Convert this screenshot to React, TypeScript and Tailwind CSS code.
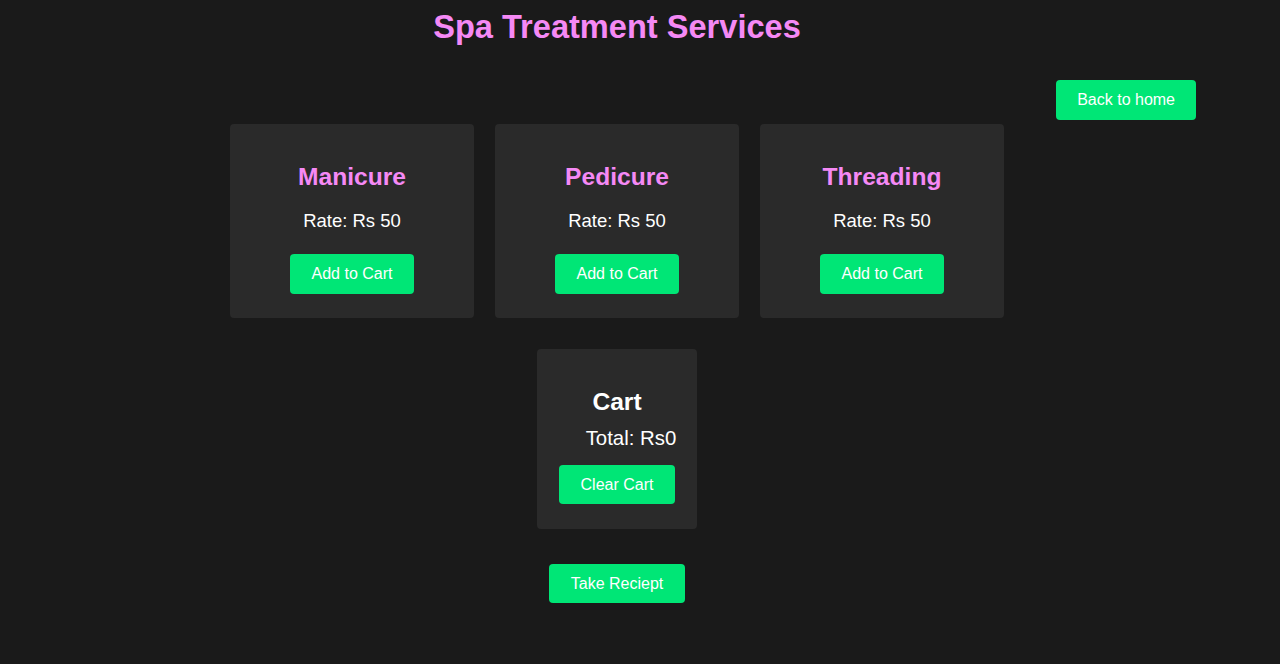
import React, { useState } from 'react';

const services = [
  { name: 'Manicure', rate: 50 },
  { name: 'Pedicure', rate: 50 },
  { name: 'Threading', rate: 50 },
];

const btn =
  'h-10 rounded-[4px] bg-[#00e676] text-white text-[16px] leading-[18px] cursor-pointer';

export default function App() {
  const [total, setTotal] = useState(0);

  return (
    <div
      className="min-h-[664px] bg-[#1a1a1a] text-white"
      style={{ fontFamily: '"Liberation Sans", Arial, sans-serif' }}
    >
      <div className="w-[1234px] flex flex-col items-center pt-2">
        <h1 className="text-[32.6px] leading-[37px] font-bold text-[#f589f5]">
          Spa Treatment Services
        </h1>

        <div className="w-full flex justify-end pr-[38px] mt-[35px]">
          <button className={`${btn} px-[21px]`}>Back to home</button>
        </div>

        {/* Services */}
        <div className="flex gap-[21px] mt-1">
          {services.map((s) => (
            <div
              key={s.name}
              className="w-[244px] h-[194px] bg-[#2a2a2a] rounded-[4px] flex flex-col items-center pt-[39px]"
            >
              <h2 className="text-[24.6px] leading-[28px] font-bold text-[#f589f5]">{s.name}</h2>
              <p className="text-[18.5px] leading-[21px] mt-[19px]">Rate: Rs {s.rate}</p>
              <button className={`${btn} px-[22px] mt-[23px]`} onClick={() => setTotal(total + s.rate)}>
                Add to Cart
              </button>
            </div>
          ))}
        </div>

        {/* Cart */}
        <div className="w-[160px] h-[180px] mt-[31px] bg-[#2a2a2a] rounded-[4px] flex flex-col items-center pt-[39px]">
          <h2 className="text-[24.6px] leading-[28px] font-bold">Cart</h2>
          <p className="text-[20.4px] leading-[23px] mt-[11px] pl-7">Total: Rs{total}</p>
          <button className={`${btn} px-[22px] mt-[15px] h-[39px]`} onClick={() => setTotal(0)}>
            Clear Cart
          </button>
        </div>

        <button className={`${btn} px-[22px] mt-[35px] h-[39px]`}>Take Reciept</button>
      </div>
    </div>
  );
}
